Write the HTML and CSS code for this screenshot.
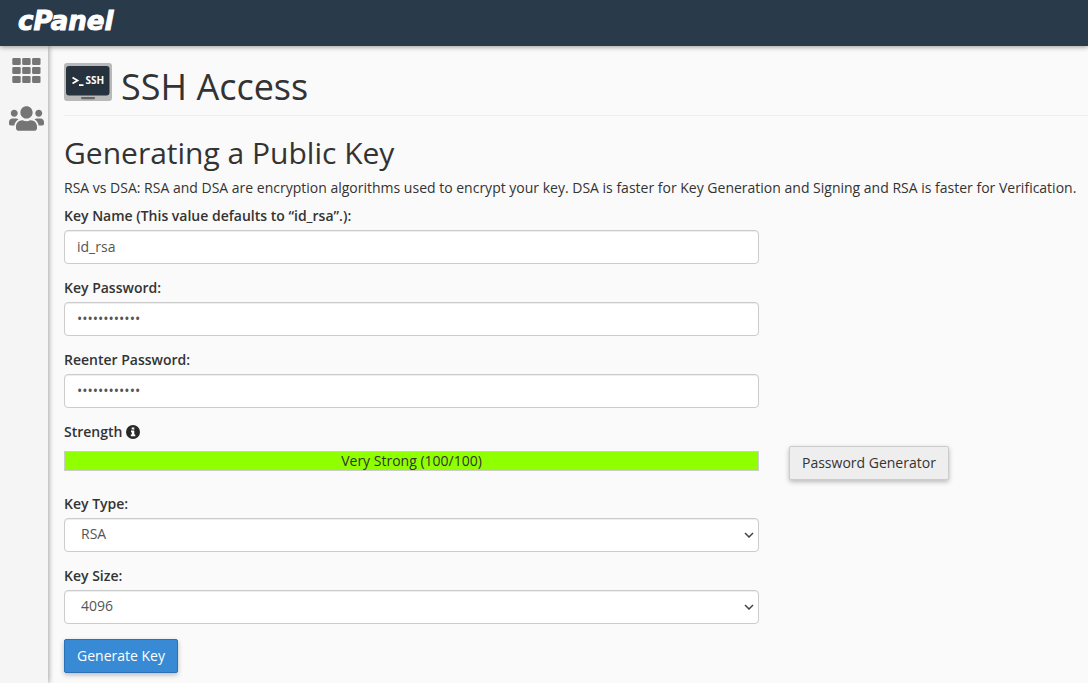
FILE: index.html
```html
<!DOCTYPE html>
<html lang="en">
<head>
<meta charset="utf-8">
<meta name="viewport" content="width=device-width, initial-scale=1">
<title>SSH Access - cPanel</title>
<link rel="stylesheet" href="styles.css">
</head>
<body>
<header class="topbar"><a class="brand" href="#">cPanel</a></header>
<div class="shell">
  <nav class="sidebar" aria-label="Main">
    <a class="nav-link" href="#" aria-label="Tools">
      <svg width="29" height="26" viewBox="0 0 29 26" fill="currentColor">
        <rect x="0.300" y="0" width="8.400" height="7" rx="1.300"/><rect x="10.200" y="0" width="8.400" height="7" rx="1.300"/><rect x="20.100" y="0" width="8.400" height="7" rx="1.300"/>
        <rect x="0.300" y="9" width="8.400" height="7" rx="1.300"/><rect x="10.200" y="9" width="8.400" height="7" rx="1.300"/><rect x="20.100" y="9" width="8.400" height="7" rx="1.300"/>
        <rect x="0.300" y="18" width="8.400" height="7" rx="1.300"/><rect x="10.200" y="18" width="8.400" height="7" rx="1.300"/><rect x="20.100" y="18" width="8.400" height="7" rx="1.300"/>
      </svg>
    </a>
    <a class="nav-link" href="#" aria-label="User Manager">
      <svg width="35" height="25" viewBox="0 0 640 448" fill="currentColor">
        <path d="M96 192c35.300 0 64-28.700 64-64s-28.700-64-64-64-64 28.700-64 64 28.700 64 64 64zm448 0c35.300 0 64-28.700 64-64s-28.700-64-64-64-64 28.700-64 64 28.700 64 64 64zm32 32h-64c-17.600 0-33.500 7.100-45.100 18.600 40.300 22.100 68.900 62 75.100 109.400h66c17.700 0 32-14.300 32-32v-32c0-35.300-28.700-64-64-64zm-256 0c61.900 0 112-50.100 112-112S381.900 0 320 0 208 50.100 208 112s50.100 112 112 112zm76.800 32h-8.300c-20.800 10-43.900 16-68.500 16s-47.600-6-68.500-16h-8.300C179.600 256 128 307.600 128 371.200V400c0 26.500 21.500 48 48 48h288c26.500 0 48-21.500 48-48v-28.800c0-63.600-51.600-115.200-115.200-115.200zm-223.700-13.400C161.500 231.100 145.600 224 128 224H64c-35.300 0-64 28.700-64 64v32c0 17.700 14.300 32 32 32h65.900c6.300-47.400 34.900-87.300 75.200-109.400z"/>
      </svg>
    </a>
  </nav>
  <main class="content">
    <h1 class="page-title">
      <svg class="ssh-icon" width="48" height="38" viewBox="0 0 48 38" aria-hidden="true">
        <rect width="48" height="38" rx="3" fill="#b9b9b9"/>
        <rect x="2" y="3" width="43.500" height="29.500" rx="3" fill="#26323d"/>
        <rect x="17" y="34" width="14" height="2.200" rx="1" fill="#666"/>
        <path d="M8.500 14.500l5 3-5 3M15 22.200h4.500" fill="none" stroke="#fff" stroke-width="1.800"/>
        <text class="ssh-text" x="21.500" y="21">SSH</text>
      </svg>
      <span>SSH Access</span>
    </h1>
    <h2 class="section-title">Generating a Public Key</h2>
    <p class="intro">RSA vs DSA: RSA and DSA are encryption algorithms used to encrypt your key. DSA is faster for Key Generation and Signing and RSA is faster for Verification.</p>
    <form class="key-form">
      <div class="group">
        <label for="name">Key Name (This value defaults to “id_rsa”.):</label>
        <input class="control" id="name" type="text" value="id_rsa">
      </div>
      <div class="group">
        <label for="pass">Key Password:</label>
        <input class="control" id="pass" type="password" value="abcdefghijkl">
      </div>
      <div class="group">
        <label for="pass2">Reenter Password:</label>
        <input class="control" id="pass2" type="password" value="abcdefghijkl">
      </div>
      <div class="group strength">
        <div class="strength-label" id="strength">Strength
          <svg width="14" height="14" viewBox="0 0 14 14" aria-hidden="true"><circle cx="7" cy="7" r="7" fill="#282828"/><path d="M5.700 2.500h2.600v2H5.700zM5 5.500h3.300v4h1v1.700H4.800V9.500h1V7.200H5z" fill="#fff"/></svg>
        </div>
        <div class="meter" role="meter" aria-labelledby="strength" aria-valuenow="100">Very Strong (100/100)</div>
      </div>
      <button class="btn generator" type="button">Password Generator</button>
      <div class="group">
        <label for="type">Key Type:</label>
        <select class="control select" id="type"><option>RSA</option><option>DSA</option></select>
      </div>
      <div class="group">
        <label for="size">Key Size:</label>
        <select class="control select" id="size"><option>4096</option><option>2048</option></select>
      </div>
      <div class="actions"><button class="btn primary" type="submit">Generate Key</button></div>
    </form>
  </main>
</div>
</body>
</html>
```
FILE: styles.css
```css
* { box-sizing: border-box; }
body {
  margin: 0;
  min-height: 100vh;
  display: flex;
  flex-direction: column;
  background: #fafafa;
  color: #333;
  font: 14px/20px "Open Sans", "Noto Sans", sans-serif;
}
.topbar {
  height: 46px;
  padding: 6px 18px;
  background: #293a4a;
  box-shadow: 0 1px 5px rgba(0, 0, 0, .4);
  z-index: 2;
}
.brand {
  color: #fff;
  font: italic bold 26px/30px "DejaVu Sans", sans-serif;
  text-decoration: none;
  -webkit-text-stroke: 1px #fff;
}
.shell { display: flex; flex: 1; }
.sidebar {
  flex: 0 0 48px;
  display: flex;
  flex-direction: column;
  align-items: center;
  gap: 22px;
  padding: 12px 0 0 5px;
  background: #f5f5f5;
  box-shadow: 1px 0 5px rgba(0, 0, 0, .35);
}
.nav-link { display: flex; color: #757575; }
.content { flex: 1; min-width: 0; padding: 17px 0 10px 16px; }
.page-title {
  display: flex;
  gap: 9px;
  margin: 0;
  padding-bottom: 6px;
  border-bottom: 1px solid #eee;
  font-size: 36px;
  line-height: 44px;
  font-weight: 400;
}
.page-title span { padding-top: 2px; }
.ssh-text { font: bold 10px "Open Sans", sans-serif; fill: #fff; }
.section-title {
  margin: 20px 0 8px;
  font-size: 30px;
  line-height: 34px;
  font-weight: 400;
}
.intro { margin: 0 0 8px; }
.key-form {
  display: grid;
  grid-template-columns: minmax(0, 695fr) minmax(0, 299fr);
  column-gap: 30px;
  row-gap: 14px;
}
.group { grid-column: 1; }
.group label { display: block; margin-bottom: 4px; font-weight: 600; }
.control {
  display: block;
  width: 100%;
  height: 34px;
  padding: 5px 12px 7px;
  border: 1px solid #ccc;
  border-radius: 4px;
  background: #fff;
  color: #555;
  font: inherit;
  box-shadow: inset 0 1px 1px rgba(0, 0, 0, .075);
}
.select {
  appearance: none;
  padding-left: 16px;
  background: #fff url("data:image/svg+xml,%3Csvg xmlns='http://www.w3.org/2000/svg' width='10' height='6'%3E%3Cpath d='M1 1l4 4 4-4' fill='none' stroke='%23444' stroke-width='1.500'/%3E%3C/svg%3E") no-repeat right 4px center;
}
.strength { height: 58px; }
.strength-label {
  display: flex;
  align-items: center;
  gap: 4px;
  margin-bottom: 9px;
  font-weight: 600;
}
.meter {
  height: 20px;
  border: 1px solid #ccc;
  background: #90ff00;
  line-height: 18px;
  text-align: center;
}
.btn {
  height: 34px;
  padding: 6px 12px;
  border: 1px solid #ccc;
  border-radius: 2px;
  background: #eee;
  color: #333;
  font: inherit;
  box-shadow: 0 2px 5px rgba(0, 0, 0, .26);
}
.generator { grid-column: 2; justify-self: start; margin-top: 24px; }
.primary { border-color: #2a72b5; background: #378ad3; color: #fff; }
.actions { grid-column: 1; margin-top: 1px; }
```
